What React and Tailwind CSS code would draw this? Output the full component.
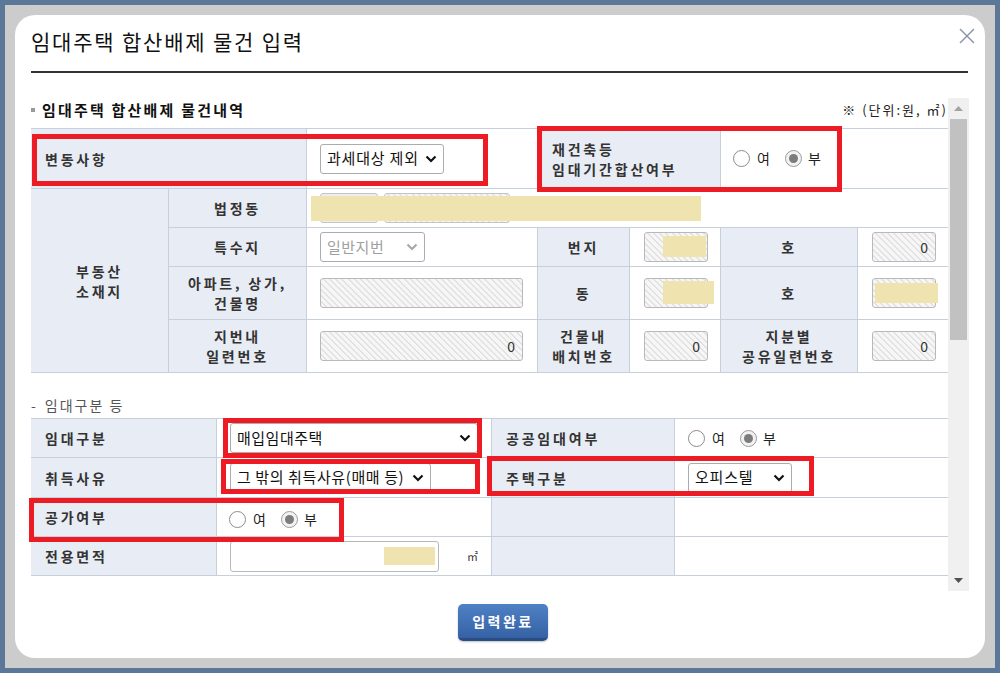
import React from "react";

function Chevron({ cls }) {
  return (
    <svg width="12" height="8" viewBox="0 0 12 8" className={cls}>
      <polyline points="1.5,1.5 6,6 10.5,1.5" fill="none" stroke="currentColor" strokeWidth="2.2" />
    </svg>
  );
}

function Select({ cls, textCls, chevCls, children }) {
  return (
    <div className={`${cls} h-[30px] border border-[#acacac] rounded-[3px] bg-white flex items-center justify-between pl-[6px] pr-[6px]`}>
      <span className={textCls}>{children}</span>
      <Chevron cls={chevCls} />
    </div>
  );
}

function Hatch({ cls, value, children }) {
  return (
    <div className={`relative ${cls} h-[30px] border border-[#b9b9b9] rounded-[3px] bg-[repeating-linear-gradient(45deg,#f6f6f6_0px,#f6f6f6_3px,#e2e2e2_3px,#e2e2e2_4.4px)] flex items-center justify-end pr-[7px] text-[14px] text-[#333]`}>
      {value}
      {children}
    </div>
  );
}

function Radio({ checked }) {
  return checked ? (
    <span className="w-[17px] h-[17px] rounded-full border border-[#9a9a9a] bg-[#f2f2f2] flex items-center justify-center">
      <span className="w-[9px] h-[9px] rounded-full bg-[#7c7c7c]" />
    </span>
  ) : (
    <span className="w-[17px] h-[17px] rounded-full border border-[#8c8c8c] bg-white" />
  );
}

function YesNo() {
  return (
    <div className="flex items-center text-[14px] text-[#222]">
      <Radio />
      <span className="ml-[7px]">여</span>
      <span className="ml-[15px]"><Radio checked /></span>
      <span className="ml-[6px]">부</span>
    </div>
  );
}

function Red({ cls }) {
  return <div className={`absolute border-[5px] border-[#ed1c24] ${cls}`} />;
}

const L = "bg-[#e8ecf4] border-t border-[#c6cfda] font-bold text-[14px] tracking-[2.8px] text-[#333] leading-[20px]";
const V = "bg-white border-t border-[#c6cfda]";

export default function App() {
  return (
    <div className="relative w-[1000px] h-[673px] bg-[#5b7899] p-[5px] font-['Noto_Sans_CJK_KR','Noto_Sans',sans-serif] overflow-hidden">
      <div className="h-full bg-[#cccccc] p-[10px]">
        <div className="relative h-full bg-white rounded-[20px] flex flex-col">
          <div className="ml-[16px] mr-[17px] h-[58px] border-b-2 border-[#333] pt-[14px]">
            <h1 className="text-[21px] leading-[24px] tracking-[1.8px] text-[#111]">임대주택 합산배제 물건 입력</h1>
          </div>
          <svg className="absolute right-[10px] top-[13px]" width="16" height="16" viewBox="0 0 16 16">
            <line x1="1" y1="1" x2="15" y2="15" stroke="#8b93a7" strokeWidth="1.4" />
            <line x1="15" y1="1" x2="1" y2="15" stroke="#8b93a7" strokeWidth="1.4" />
          </svg>

          <div className="mt-[25px] ml-[16px] mr-[16px] h-[493px] flex">
            <div className="w-[917px] overflow-hidden">
              <div className="h-[30px] flex items-start justify-between pt-[4px] leading-[16px]">
                <div className="flex items-center">
                  <span className="w-[4px] h-[4px] bg-[#9a9a9a]" />
                  <span className="ml-[7px] text-[15px] font-bold tracking-[2.2px] text-[#111]">임대주택 합산배제 물건내역</span>
                </div>
                <span className="text-[13px] tracking-[2px] text-[#222]">※ (단위:원, ㎡)</span>
              </div>

              <div className="grid grid-cols-[137px_138px_231px_92px_91px_137px_91px] grid-rows-[60px_39px_39px_53px_53px] border-b border-[#c6cfda]">
                <div className={`${L} col-span-2 flex items-center pl-[14px]`}>변동사항</div>
                <div className={`${V} border-l flex items-center pl-[13px]`}>
                  <Select cls="w-[124px]" textCls="text-[15px] tracking-[0.8px] text-[#111]" chevCls="text-[#111]">과세대상 제외</Select>
                </div>
                <div className={`${L} border-l col-span-2 flex flex-col justify-center pl-[14px]`}>
                  <span>재건축등</span>
                  <span>임대기간합산여부</span>
                </div>
                <div className={`${V} border-l col-span-2 flex items-center pl-[12px]`}>
                  <YesNo />
                </div>

                <div className={`${L} row-span-4 flex flex-col items-center justify-center`}>
                  <span>부동산</span>
                  <span>소재지</span>
                </div>
                <div className={`${L} border-l flex items-center justify-center`}>법정동</div>
                <div className={`${V} border-l col-span-5 relative flex items-center pl-[13px]`}>
                  <div className="w-[58px] h-[30px] border border-[#c4c4c4] rounded-[3px] bg-[#eeeeee]" />
                  <div className="ml-[6px] w-[126px] h-[30px] border border-[#c4c4c4] rounded-[3px] bg-[repeating-linear-gradient(45deg,#f6f6f6_0px,#f6f6f6_3px,#e2e2e2_3px,#e2e2e2_4.4px)]" />
                  <div className="absolute left-[4px] top-[7px] w-[390px] h-[25px] bg-[#efe3b0]" />
                </div>

                <div className={`${L} border-l flex items-center justify-center`}>특수지</div>
                <div className={`${V} border-l flex items-center pl-[13px]`}>
                  <Select cls="w-[105px]" textCls="text-[15px] tracking-[0.5px] text-[#a0a0a0]" chevCls="text-[#a8a8a8]">일반지번</Select>
                </div>
                <div className={`${L} border-l flex items-center justify-center`}>번지</div>
                <div className={`${V} border-l flex items-center pl-[14px]`}>
                  <Hatch cls="w-[64px]">
                    <div className="absolute left-[18px] top-[3px] w-[43px] h-[21px] bg-[#efe3b0]" />
                  </Hatch>
                </div>
                <div className={`${L} border-l flex items-center justify-center`}>호</div>
                <div className={`${V} border-l flex items-center pl-[14px]`}>
                  <Hatch cls="w-[64px]" value="0" />
                </div>

                <div className={`${L} border-l flex flex-col items-center justify-center`}>
                  <span>아파트, 상가,</span>
                  <span>건물명</span>
                </div>
                <div className={`${V} border-l flex items-center pl-[13px]`}>
                  <Hatch cls="w-[203px]" />
                </div>
                <div className={`${L} border-l flex items-center justify-center`}>동</div>
                <div className={`${V} border-l flex items-center pl-[14px]`}>
                  <Hatch cls="w-[64px]">
                    <div className="absolute left-[18px] top-[2px] w-[51px] h-[23px] bg-[#efe3b0]" />
                  </Hatch>
                </div>
                <div className={`${L} border-l flex items-center justify-center`}>호</div>
                <div className={`${V} border-l flex items-center pl-[14px]`}>
                  <Hatch cls="w-[64px]">
                    <div className="absolute left-[2px] top-[4px] w-[63px] h-[20px] bg-[#efe3b0]" />
                  </Hatch>
                </div>

                <div className={`${L} border-l flex flex-col items-center justify-center`}>
                  <span>지번내</span>
                  <span>일련번호</span>
                </div>
                <div className={`${V} border-l flex items-center pl-[13px]`}>
                  <Hatch cls="w-[203px]" value="0" />
                </div>
                <div className={`${L} border-l flex flex-col items-center justify-center`}>
                  <span>건물내</span>
                  <span>배치번호</span>
                </div>
                <div className={`${V} border-l flex items-center pl-[14px]`}>
                  <Hatch cls="w-[64px]" value="0" />
                </div>
                <div className={`${L} border-l flex flex-col items-center justify-center`}>
                  <span>지분별</span>
                  <span>공유일련번호</span>
                </div>
                <div className={`${V} border-l flex items-center pl-[14px]`}>
                  <Hatch cls="w-[64px]" value="0" />
                </div>
              </div>

              <div className="pt-[23px] pb-[4px] leading-[18px] text-[14px] tracking-[2px] text-[#555] flex items-center">
                <span>-</span>
                <span className="ml-[7px]">임대구분 등</span>
              </div>

              <div className="grid grid-cols-[185px_275px_183px_274px] grid-rows-[39px_40px_39px_39px] border-b border-[#c6cfda]">
                <div className={`${L} flex items-center pl-[14px]`}>임대구분</div>
                <div className={`${V} border-l flex items-center pl-[13px]`}>
                  <Select cls="w-[248px]" textCls="text-[15px] tracking-[0.5px] text-[#111]" chevCls="text-[#111]">매입임대주택</Select>
                </div>
                <div className={`${L} border-l flex items-center pl-[14px]`}>공공임대여부</div>
                <div className={`${V} border-l flex items-center pl-[13px]`}>
                  <YesNo />
                </div>

                <div className={`${L} flex items-center pl-[14px]`}>취득사유</div>
                <div className={`${V} border-l flex items-center pl-[13px]`}>
                  <Select cls="w-[201px]" textCls="text-[15px] tracking-[0.6px] text-[#111]" chevCls="text-[#111]">그 밖의 취득사유(매매 등)</Select>
                </div>
                <div className={`${L} border-l flex items-center pl-[14px]`}>주택구분</div>
                <div className={`${V} border-l flex items-center pl-[13px]`}>
                  <Select cls="w-[104px]" textCls="text-[15px] tracking-[0.8px] text-[#111]" chevCls="text-[#111]">오피스텔</Select>
                </div>

                <div className={`${L} flex items-center pl-[14px]`}>공가여부</div>
                <div className={`${V} border-l flex items-center pl-[12px] pt-[4px]`}>
                  <YesNo />
                </div>
                <div className={`${L} border-l`} />
                <div className={`${V} border-l`} />

                <div className={`${L} flex items-center pl-[14px]`}>전용면적</div>
                <div className={`${V} border-l flex items-center pl-[13px]`}>
                  <div className="relative w-[209px] h-[31px] border border-[#b9b9b9] rounded-[3px] bg-white">
                    <div className="absolute left-[153px] top-[5px] w-[51px] h-[18px] bg-[#efe3b0]" />
                  </div>
                  <span className="ml-[28px] text-[11px] text-[#333]">㎡</span>
                </div>
                <div className={`${L} border-l`} />
                <div className={`${V} border-l`} />
              </div>
            </div>

            <div className="w-[21px] bg-[#f0f0f0] flex flex-col">
              <div className="h-[21px] flex items-center justify-center">
                <svg width="9" height="5" viewBox="0 0 9 5"><polygon points="0,5 4.5,0 9,5" fill="#a3a3a3" /></svg>
              </div>
              <div className="mx-[2px] h-[221px] bg-[#c1c1c1]" />
              <div className="flex-1" />
              <div className="h-[21px] flex items-center justify-center">
                <svg width="9" height="5" viewBox="0 0 9 5"><polygon points="0,0 9,0 4.5,5" fill="#505050" /></svg>
              </div>
            </div>
          </div>

          <div className="mt-[13px] flex justify-center pl-[6px]">
            <button className="w-[90px] h-[37px] rounded-[5px] bg-linear-to-b from-[#4f81c5] to-[#3562a5] border-b-[3px] border-[#294d84] text-white font-bold text-[14px] tracking-[2.5px] shadow-[0_1px_2px_rgba(0,0,0,0.25)]">
              입력완료
            </button>
          </div>
        </div>
      </div>

      <Red cls="left-[32px] top-[134px] w-[456px] h-[52px]" />
      <Red cls="left-[537px] top-[126px] w-[305px] h-[66px]" />
      <Red cls="left-[223px] top-[418px] w-[259px] h-[40px]" />
      <Red cls="left-[221px] top-[459px] w-[259px] h-[35px]" />
      <Red cls="left-[487px] top-[456px] w-[327px] h-[40px]" />
      <Red cls="left-[29px] top-[498px] w-[315px] h-[44px]" />
    </div>
  );
}
